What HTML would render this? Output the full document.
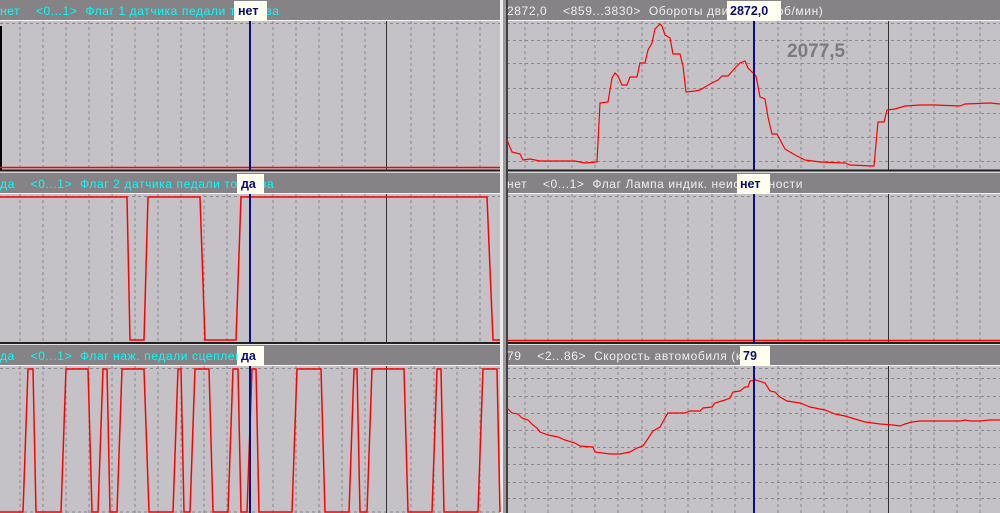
<!DOCTYPE html>
<html><head><meta charset="utf-8"><style>
html,body{margin:0;padding:0;background:#c4c2c6;}
svg{display:block;}
text{font-family:"Liberation Sans","DejaVu Sans",sans-serif;}
</style></head><body>
<svg width="1000" height="513" viewBox="0 0 1000 513" xmlns="http://www.w3.org/2000/svg">
<defs>
<g id="vgl">
<path d="M20 0V150M43 0V150M66 0V150M89 0V150M112 0V150M135 0V150M158 0V150M181 0V150M204 0V150M227 0V150M273 0V150M296 0V150M319 0V150M342 0V150M365 0V150M411 0V150M434 0V150M457 0V150M480 0V150" stroke="#8a888c" stroke-dasharray="3,3" fill="none"/>
</g>
<g id="vgr">
<path d="M525 0V150M548 0V150M572 0V150M595 0V150M618 0V150M642 0V150M665 0V150M688 0V150M712 0V150M735 0V150M778 0V150M801 0V150M824 0V150M847 0V150M870 0V150M911 0V150M934 0V150M957 0V150M980 0V150" stroke="#8a888c" stroke-dasharray="3,3" fill="none"/>
</g>
</defs>
<rect width="1000" height="513" fill="#c4c2c6"/>

<rect x="0" y="0" width="500" height="20" fill="#858385"/>
<rect x="507" y="0" width="493" height="20" fill="#858385"/>
<rect x="0" y="173" width="500" height="20" fill="#858385"/>
<rect x="507" y="173" width="493" height="20" fill="#858385"/>
<rect x="0" y="345" width="500" height="20" fill="#858385"/>
<rect x="507" y="345" width="493" height="20" fill="#858385"/>
<path d="M0 20.5H1000M0 193.5H1000M0 365.5H1000" stroke="#f4f4f4"/>
<path d="M0 170.5H1000M0 343H1000" stroke="#202020" stroke-width="2"/>
<path d="M0 172H1000M0 344.5H1000" stroke="#e0e0e0"/>

<g transform="translate(0,21)"><use href="#vgl"/></g>
<g transform="translate(0,194)"><use href="#vgl"/></g>
<g transform="translate(0,366)"><use href="#vgl"/></g>
<g transform="translate(0,21)"><use href="#vgr"/></g>
<g transform="translate(0,194)"><use href="#vgr"/></g>
<g transform="translate(0,366)"><use href="#vgr"/></g>
<path d="M0 23.5H500M507 23.5H1000M0 196.5H500M507 196.5H1000M0 368.5H500M507 368.5H1000" stroke="#8a888c" stroke-dasharray="3,3"/>
<path d="M507 40.5H1000M507 63.5H1000M507 88.5H1000M507 113.5H1000M507 137.5H1000M507 161.5H1000" stroke="#8a888c" stroke-dasharray="3,3"/>
<path d="M507 378.5H1000M507 396.5H1000M507 413.5H1000M507 430.5H1000M507 447.5H1000M507 464.5H1000M507 482.5H1000M507 498.5H1000M0 512H500" stroke="#8a888c" stroke-dasharray="3,3"/>

<path d="M386.5 21V170M386.5 194V343M386.5 366V513M888.5 21V170M888.5 194V343M888.5 366V513" stroke="#303030"/>
<path d="M1 26V170" stroke="#000" stroke-width="2"/>

<rect x="500" y="0" width="3" height="513" fill="#ececec"/>
<rect x="503" y="0" width="3" height="513" fill="#9c9a9e"/>
<rect x="506" y="0" width="2" height="513" fill="#404040"/>

<path d="M0 167.5H500" stroke="#ff0000" stroke-width="1.5"/>
<path d="M0 197H127L130 340H144L148 197H200L205 340H236L241 197H487L493 340H500" stroke="#ff0000" stroke-width="1.5" fill="none"/>
<path d="M0 512L23 512L28 369H33L36 512H37L61 512L66 369H88L92 512H98L103 369H107L110 512H117L122 369H144L149 512H173L178 369H181L184 512H190L195 369H209L213 512H228L233 369H238L241 512H247L252 369H256L259 512H292L297 369H321L325 512H349L354 369H357L360 512H367L372 369H404L408 512H432L437 369H441L444 512H478L483 369H497L500 512" stroke="#ff0000" stroke-width="1.5" fill="none"/>
<path d="M508 340.5H1000" stroke="#ff0000" stroke-width="1.5"/>
<polyline fill="none" stroke="#ff0000" stroke-width="1.2" points="507,140 512,152 520,154 523,160 530,159 540,161 575,161 585,163 597,162 600,103 608,102 612,78 615,73 618,76 622,85 627,85 630,77 637,77 640,63 645,63 648,50 652,43 655,29 660,24 662,26 665,35 670,38 673,54 680,54 683,66 686,92 695,91 700,90 705,87 712,83 718,80 722,76 728,76 735,68 740,63 745,61 748,68 752,72 756,76 760,97 765,99 768,117 772,134 777,134 785,149 795,155 805,160 820,162 845,163 850,165 872,166 874,166 878,122 884,122 887,110 895,109 905,106 920,105 935,105 960,106 965,104 990,103 1000,104"/>
<polyline fill="none" stroke="#ff0000" stroke-width="1.2" points="507,408 512,413 518,414 522,418 528,420 533,425 537,428 540,432 548,435 558,437 565,440 575,443 580,446 593,447 595,452 610,454 620,454 630,452 637,448 643,446 647,440 653,431 660,427 665,418 668,413 685,413 690,411 700,411 703,408 712,407 715,403 725,400 730,398 733,392 740,391 745,387 748,387 750,381 756,380 765,383 770,391 775,392 780,397 787,401 800,403 810,407 825,410 835,414 845,416 855,419 865,422 880,424 893,425 900,426 905,424 912,422 920,421 960,421 965,420 970,421 980,421 990,420 1000,420"/>

<path d="M250 21V170M250 194V343M250 366V513M754 21V170M754 194V343M754 366V513" stroke="#0a0a8a" stroke-width="2"/>

<text x="787" y="57" font-size="19" font-weight="bold" fill="#7c7a7e">2077,5</text>

<g font-size="12" letter-spacing="0.6">
<text x="0" y="15" fill="#00ffff" xml:space="preserve">нет    &lt;0...1&gt;  Флаг 1 датчика педали тормоза</text>
<text x="0" y="188" fill="#00ffff" xml:space="preserve">да    &lt;0...1&gt;  Флаг 2 датчика педали тормоза</text>
<text x="0" y="360" fill="#00ffff" xml:space="preserve">да    &lt;0...1&gt;  Флаг наж. педали сцепления</text>
<text x="507" y="15" fill="#f0f0f0" xml:space="preserve">2872,0    &lt;859...3830&gt;  Обороты двигателя (об/мин)</text>
<text x="507" y="188" fill="#f0f0f0" xml:space="preserve">нет    &lt;0...1&gt;  Флаг Лампа индик. неисправности</text>
<text x="507" y="360" fill="#f0f0f0" xml:space="preserve">79    &lt;2...86&gt;  Скорость автомобиля (км/ч)</text>
</g>

<g font-size="12.5" font-weight="bold" fill="#0a0a7a">
<rect x="234" y="1" width="33" height="20" fill="#fffff0"/><text x="238" y="15">нет</text>
<rect x="237" y="174" width="27" height="20" fill="#fffff0"/><text x="241" y="188">да</text>
<rect x="237" y="346" width="27" height="20" fill="#fffff0"/><text x="241" y="360">да</text>
<rect x="727" y="1" width="54" height="20" fill="#fffff0"/><text x="730" y="15">2872,0</text>
<rect x="737" y="174" width="33" height="20" fill="#fffff0"/><text x="740" y="188">нет</text>
<rect x="740" y="346" width="30" height="20" fill="#fffff0"/><text x="743" y="360">79</text>
</g>
</svg>
</body></html>
